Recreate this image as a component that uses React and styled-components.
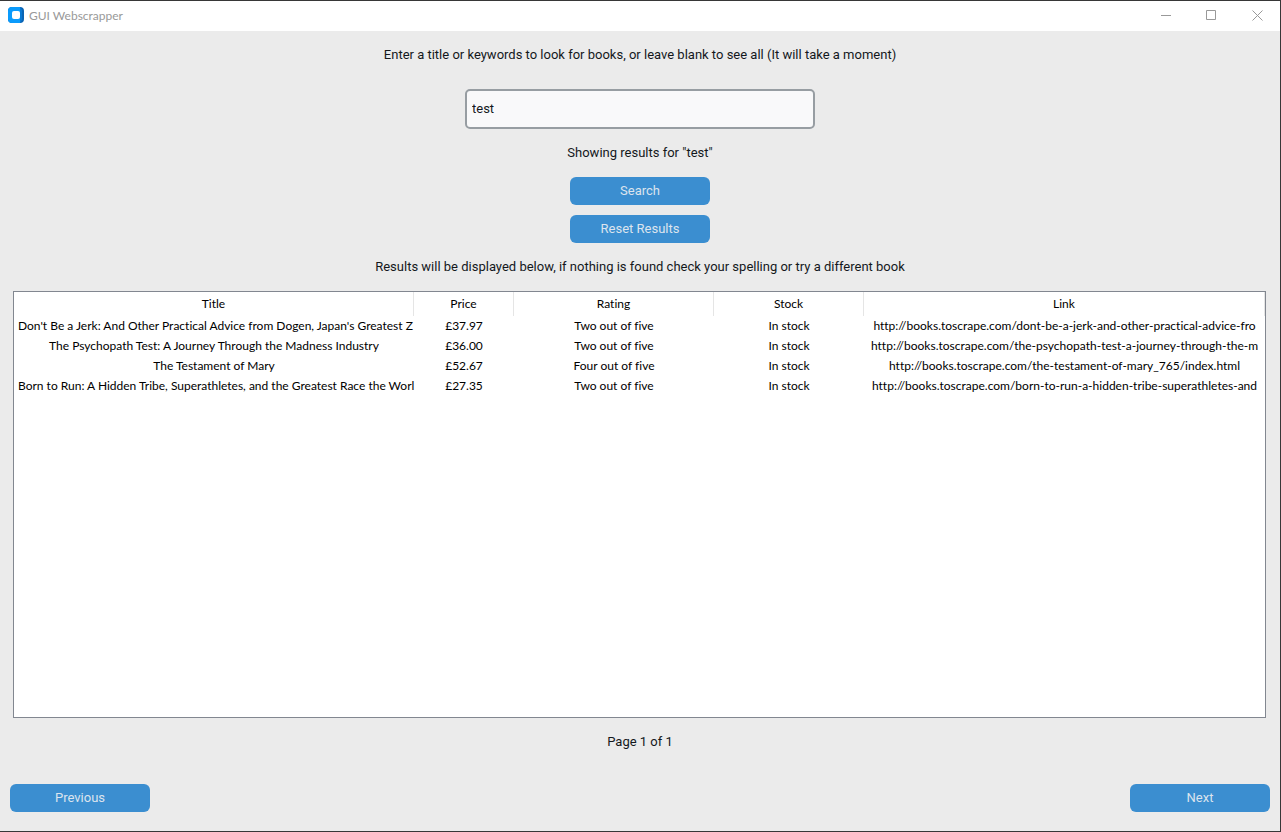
import React, { useState } from "react";
import styled, { createGlobalStyle } from "styled-components";

const GlobalStyle = createGlobalStyle`
  * { box-sizing: border-box; }
  body { margin: 0; background: #ebebeb; }
`;

const Window = styled.div`
  display: flex;
  flex-direction: column;
  min-height: 100vh;
  background: #ebebeb;
  border: solid #373737;
  border-width: 1px 1px 1px 0;
  color: #14181c;
  font: 13px/28px Roboto, sans-serif;
`;

const TitleBar = styled.header`
  display: flex;
  align-items: center;
  height: 30px;
  padding: 0 0 2px 8px;
  background: #fff;
`;

const AppName = styled.h1`
  flex: 1;
  margin: 0 0 0 5px;
  padding-top: 2px;
  color: #999;
  font: 12px/16px Lato, sans-serif;
`;

const WindowButton = styled.button`
  display: grid;
  place-items: center;
  width: 46px;
  height: 28px;
  padding: 0;
  border: 0;
  background: none;
  color: #999;
`;

const SearchForm = styled.form`
  display: flex;
  flex-direction: column;
  align-items: center;
  gap: 10px;
  padding: 10px 10px 0;
`;

const Message = styled.p`
  margin: 0;
  text-align: center;
`;

const Prompt = styled.label`
  margin-bottom: 10px;
`;

const SearchBox = styled.input`
  width: 350px;
  max-width: 100%;
  height: 40px;
  padding: 0 5px 2px;
  border: 2px solid #979da2;
  border-radius: 5px;
  outline: none;
  background: #f9f9fa;
  color: #14181c;
  font: inherit;
`;

const Button = styled.button`
  width: 140px;
  height: 28px;
  padding: 0;
  border: 0;
  border-radius: 6px;
  background: #3b8ed0;
  color: #dce4ee;
  font: inherit;
  line-height: 28px;
`;

const TableFrame = styled.div`
  flex: 1;
  margin: 10px 14px 10px 13px;
  border: 1px solid #828790;
  background: #fff;
`;

const Table = styled.table`
  width: 100%;
  table-layout: fixed;
  border-collapse: separate;
  border-spacing: 0;
  color: #000;
  font: 12px/20px Lato, sans-serif;
  font-variant-ligatures: none;
`;

const Column = styled.col`
  width: ${(p) => p.$width};
`;

const HeadCell = styled.th`
  height: 24px;
  padding: 0;
  border-right: 1px solid #e5e5e5;
  font-weight: 400;
`;

const Cell = styled.td`
  height: 20px;
  padding: 0 4px;
`;

const CellText = styled.div`
  width: fit-content;
  max-width: 100%;
  margin: 0 auto;
  white-space: nowrap;
`;

const BookLink = styled.a`
  color: inherit;
  text-decoration: none;
`;

const Pager = styled.nav`
  display: flex;
  justify-content: space-between;
  padding: 28px 10px 19px;
`;

const columns = [
  ["Title", "400px"],
  ["Price", "100px"],
  ["Rating", "200px"],
  ["Stock", "150px"],
  ["Link", "auto"],
];

const books = [
  ["Don't Be a Jerk: And Other Practical Advice from Dogen, Japan's Greatest Z", "£37.97", "Two out of five", "http://books.toscrape.com/dont-be-a-jerk-and-other-practical-advice-fro"],
  ["The Psychopath Test: A Journey Through the Madness Industry", "£36.00", "Two out of five", "http://books.toscrape.com/the-psychopath-test-a-journey-through-the-m"],
  ["The Testament of Mary", "£52.67", "Four out of five", "http://books.toscrape.com/the-testament-of-mary_765/index.html"],
  ["Born to Run: A Hidden Tribe, Superathletes, and the Greatest Race the Worl", "£27.35", "Two out of five", "http://books.toscrape.com/born-to-run-a-hidden-tribe-superathletes-and"],
];

function AppIcon() {
  return (
    <svg width="16" height="16" viewBox="0 0 16 16" aria-hidden="true">
      <rect width="16" height="16" rx="4" fill="#0a64b4" />
      <path d="M4 0h8v16H4a4 4 0 0 1-4-4V4a4 4 0 0 1 4-4z" fill="#0a9bfc" />
      <path d="M12 0l2 3v10l-2 3z" fill="#0878d2" />
      <rect x="4" y="4" width="8" height="8" rx="2" fill="#fff" />
    </svg>
  );
}

function Glyph({ d }) {
  return (
    <svg width="11" height="11" viewBox="0 0 11 11" fill="none" stroke="currentColor" aria-hidden="true">
      <path d={d} />
    </svg>
  );
}

export default function App() {
  const [query, setQuery] = useState("test");
  return (
    <>
      <GlobalStyle />
      <Window>
        <TitleBar>
          <AppIcon />
          <AppName>GUI Webscrapper</AppName>
          <WindowButton aria-label="Minimize"><Glyph d="M1 5.5h10" /></WindowButton>
          <WindowButton aria-label="Maximize"><Glyph d="M.5.5h9v9h-9z" /></WindowButton>
          <WindowButton aria-label="Close"><Glyph d="M.5.5l10 10M10.5.5l-10 10" /></WindowButton>
        </TitleBar>
        <SearchForm onSubmit={(e) => e.preventDefault()}>
          <Prompt htmlFor="query">
            Enter a title or keywords to look for books, or leave blank to see all (It will take a moment)
          </Prompt>
          <SearchBox id="query" type="text" value={query} onChange={(e) => setQuery(e.target.value)} />
          <Message>Showing results for "test"</Message>
          <Button type="submit">Search</Button>
          <Button type="button" onClick={() => setQuery("")}>Reset Results</Button>
          <Message>Results will be displayed below, if nothing is found check your spelling or try a different book</Message>
        </SearchForm>
        <TableFrame>
          <Table>
            <colgroup>
              {columns.map(([name, width]) => <Column key={name} $width={width} />)}
            </colgroup>
            <thead>
              <tr>{columns.map(([name]) => <HeadCell key={name} scope="col">{name}</HeadCell>)}</tr>
            </thead>
            <tbody>
              {books.map(([title, price, rating, link]) => (
                <tr key={title}>
                  <Cell><CellText>{title}</CellText></Cell>
                  <Cell><CellText>{price}</CellText></Cell>
                  <Cell><CellText>{rating}</CellText></Cell>
                  <Cell><CellText>In stock</CellText></Cell>
                  <Cell><CellText><BookLink href={link}>{link}</BookLink></CellText></Cell>
                </tr>
              ))}
            </tbody>
          </Table>
        </TableFrame>
        <Message>Page 1 of 1</Message>
        <Pager aria-label="Result pages">
          <Button type="button">Previous</Button>
          <Button type="button">Next</Button>
        </Pager>
      </Window>
    </>
  );
}
